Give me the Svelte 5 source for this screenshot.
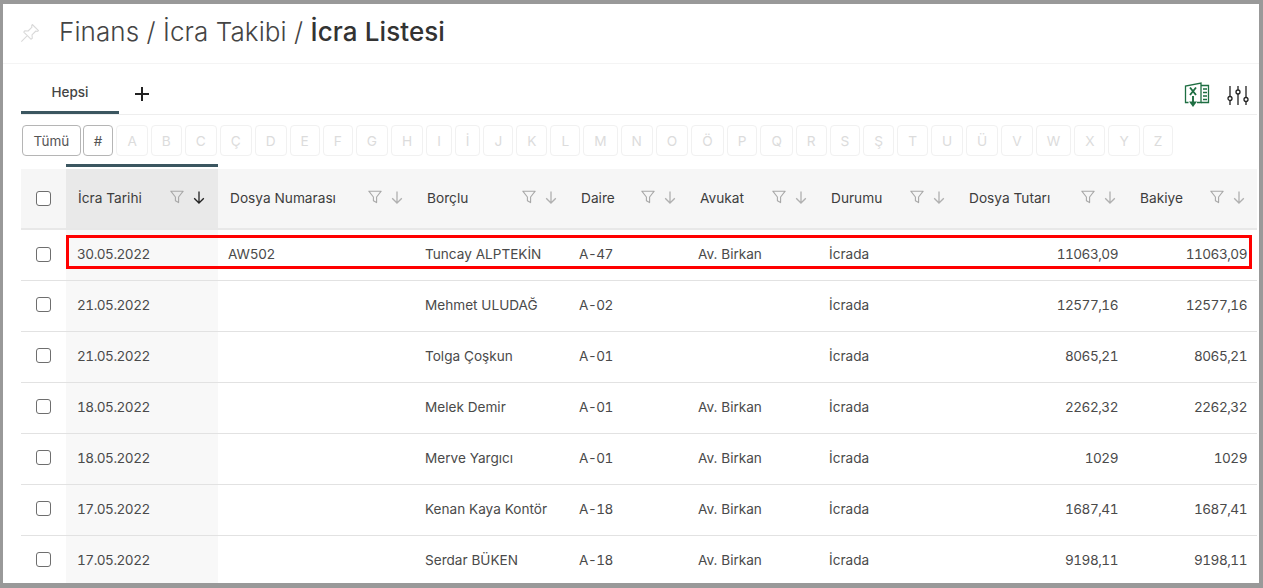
<script>
	const alphabet = ['A','B','C','Ç','D','E','F','G','H','I','İ','J','K','L','M','N','O','Ö','P','Q','R','S','Ş','T','U','Ü','V','W','X','Y','Z']

	const columns = [
		{ key: 'date', label: 'İcra Tarihi', sorted: true, num: true },
		{ key: 'file', label: 'Dosya Numarası' },
		{ key: 'debtor', label: 'Borçlu' },
		{ key: 'unit', label: 'Daire', num: true },
		{ key: 'lawyer', label: 'Avukat' },
		{ key: 'status', label: 'Durumu' },
		{ key: 'amount', label: 'Dosya Tutarı', right: true, num: true },
		{ key: 'balance', label: 'Bakiye', right: true, num: true }
	]

	const rows = [
		{ date: '30.05.2022', file: 'AW502', debtor: 'Tuncay ALPTEKİN', unit: 'A-47', lawyer: 'Av. Birkan', status: 'İcrada', amount: '11063,09', balance: '11063,09' },
		{ date: '21.05.2022', file: '', debtor: 'Mehmet ULUDAĞ', unit: 'A-02', lawyer: '', status: 'İcrada', amount: '12577,16', balance: '12577,16' },
		{ date: '21.05.2022', file: '', debtor: 'Tolga Çoşkun', unit: 'A-01', lawyer: '', status: 'İcrada', amount: '8065,21', balance: '8065,21' },
		{ date: '18.05.2022', file: '', debtor: 'Melek Demir', unit: 'A-01', lawyer: 'Av. Birkan', status: 'İcrada', amount: '2262,32', balance: '2262,32' },
		{ date: '18.05.2022', file: '', debtor: 'Merve Yargıcı', unit: 'A-01', lawyer: 'Av. Birkan', status: 'İcrada', amount: '1029', balance: '1029' },
		{ date: '17.05.2022', file: '', debtor: 'Kenan Kaya Kontör', unit: 'A-18', lawyer: 'Av. Birkan', status: 'İcrada', amount: '1687,41', balance: '1687,41' },
		{ date: '17.05.2022', file: '', debtor: 'Serdar BÜKEN', unit: 'A-18', lawyer: 'Av. Birkan', status: 'İcrada', amount: '9198,11', balance: '9198,11' }
	]
</script>

<div class="frame">
	<div class="page">
		<header class="title-bar">
			<svg class="pin" viewBox="0 0 20 20" width="20" height="20" fill="none" stroke="#d9d9d9" stroke-width="1.1" stroke-linejoin="round">
				<path d="M12.3 1.5 18.5 7.7 17 8.4 15.9 8 12 11.9 12.3 15.2 10.9 16.2 3.8 9.1 4.8 7.7 8.1 8 12 4.1 11.6 3Z" />
				<path d="M6.8 13.2 1.3 18.7" />
			</svg>
			<h1>Finans / İcra Takibi / <b>İcra Listesi</b></h1>
		</header>

		<div class="tabs">
			<div class="tab active">Hepsi</div>
			<svg class="add" viewBox="0 0 14 14" width="14" height="14" stroke="#222" stroke-width="2">
				<path d="M7 0V14M0 7H14" />
			</svg>
			<div class="tools">
				<svg viewBox="0 0 26 26" width="26" height="26" fill="none" stroke="#1e6e42" stroke-width="1.3">
					<path d="M13 20.5H17V1L1.5 4V20.5H4.5" />
					<path d="M17 3.5H24.5V20.5H17" />
					<path d="M19 7H23M19 10.5H23M19 14H23M19 17.5H23" stroke-width="1.5" />
					<path d="M6 5.5 12 13M12 5.5 6 13" stroke-width="1.9" />
					<path d="M9 14V21" stroke-width="1.9" />
					<path d="M5 19.5H13L9 25Z" fill="#1e6e42" stroke="none" />
				</svg>
				<svg viewBox="0 0 22 19" width="22" height="19" fill="none" stroke="#222" stroke-width="1.3">
					<path d="M3 0V10.5M3 14.5V19M11 0V4M11 8V19M19 0V11.5M19 15.5V19" />
					<circle cx="3" cy="12.5" r="2" />
					<circle cx="11" cy="6" r="2" />
					<circle cx="19" cy="13.5" r="2" />
				</svg>
			</div>
		</div>

		<div class="letters">
			<button class="letter on wide">Tümü</button>
			<button class="letter on">#</button>
			{#each alphabet as l}
				<button class="letter" disabled>{l}</button>
			{/each}
		</div>

		<div class="table-wrap">
			<table>
				<colgroup>
					<col style="width:45px" />
					<col style="width:152px" />
					<col style="width:197px" />
					<col style="width:154px" />
					<col style="width:119px" />
					<col style="width:131px" />
					<col style="width:138px" />
					<col style="width:171px" />
					<col style="width:129px" />
				</colgroup>
				<thead>
					<tr>
						<th class="check"><span class="box"></span></th>
						{#each columns as col}
							<th class:sorted={col.sorted}>
								<div class="th-inner">
									<span>{col.label}</span>
									<span class="th-icons">
										<svg viewBox="0 0 14 14" width="14" height="14" fill="none" stroke="#a8a8a8" stroke-width="1.1" stroke-linejoin="round">
											<path d="M0.8 1.2H13.2L8.6 7V12.6L5.4 10.8V7Z" />
										</svg>
										<svg class="arrow" viewBox="0 0 12 13" width="12" height="13" fill="none" stroke={col.sorted ? '#222' : '#b0b0b0'} stroke-width="1.3">
											<path d="M6 0.5V12M1.2 7.2 6 12 10.8 7.2" />
										</svg>
									</span>
								</div>
							</th>
						{/each}
					</tr>
				</thead>
				<tbody>
					{#each rows as row}
						<tr>
							<td class="check"><span class="box"></span></td>
							{#each columns as col}
								<td class:sorted={col.sorted} class:right={col.right} class:num={col.num}>{row[col.key]}</td>
							{/each}
						</tr>
					{/each}
				</tbody>
			</table>
			<div class="highlight"></div>
		</div>
	</div>
</div>

<style>
	:global(body) {
		margin: 0;
		background: #999;
		overflow: hidden;
	}

	.frame {
		height: 588px;
		box-sizing: border-box;
		padding: 4px 4px 5px 3px;
		font-family: Inter, "Liberation Sans", sans-serif;
		color: #444;
	}

	.page {
		height: 100%;
		background: #fff;
		overflow: hidden;
	}

	.title-bar {
		height: 60px;
		box-sizing: border-box;
		display: flex;
		align-items: center;
		gap: 19px;
		padding: 0 0 5px 17px;
		border-bottom: 1px solid #f4f4f4;
	}

	.pin {
		margin-top: 3px;
	}

	h1 {
		margin: 0;
		font-size: 26px;
		font-weight: 300;
		letter-spacing: 0.08px;
		color: #444;
		white-space: nowrap;
	}

	h1 b {
		font-weight: 500;
		color: #333;
	}

	.tabs {
		height: 51px;
		margin: 0 2px 0 18px;
		display: flex;
		align-items: flex-start;
		border-bottom: 1px solid #eee;
		box-sizing: border-box;
	}

	.tab {
		width: 98px;
		height: 50px;
		box-sizing: border-box;
		display: flex;
		align-items: center;
		justify-content: center;
		padding-top: 8px;
		font-size: 13.5px;
		font-weight: 500;
		color: #444;
		border-bottom: 3px solid #3b5660;
	}

	.add {
		margin: 23px 0 0 16px;
	}

	.tools {
		margin-left: auto;
		display: flex;
		align-items: center;
		gap: 17px;
		padding: 18px 8px 0 0;
	}

	.letters {
		display: flex;
		gap: 3px;
		margin: 10px 0 0 19px;
		height: 31px;
	}

	.letter {
		box-sizing: border-box;
		height: 31px;
		padding: 0 10px;
		background: #fff;
		border: 1px solid #f1f1f1;
		border-radius: 4px;
		font: 400 13.65px Inter, "Liberation Sans", sans-serif;
		color: #dcdcdc;
	}

	.letter.on {
		border-color: #b5b5b5;
		color: #555;
		font-size: 13.5px;
	}

	.letter.wide {
		padding: 0 10.5px;
		margin-right: -1px;
	}

	.table-wrap {
		position: relative;
		margin: 8px 0 0 18px;
		width: 1236px;
	}

	table {
		border-collapse: collapse;
		table-layout: fixed;
		width: 1236px;
	}

	th {
		height: 65px;
		padding: 3px 0 0;
		box-sizing: border-box;
		text-align: left;
		font-size: 13.7px;
		font-weight: 400;
		color: #3d3d3d;
		background: linear-gradient(#fff 5px, #f6f6f6 5px);
		border-bottom: 2px solid #e8e8e8;
	}

	th.check {
		padding-top: 4px;
	}

	th.sorted {
		background: linear-gradient(#3b5660 3px, #fff 3px, #fff 5px, #e9e9e9 5px);
	}

	.th-inner {
		display: flex;
		align-items: center;
		justify-content: space-between;
		padding: 0 12px;
	}

	th.sorted .th-inner {
		padding-right: 13px;
	}

	.th-icons {
		display: flex;
		align-items: center;
		gap: 9px;
		margin-top: -1px;
	}

	td {
		height: 51px;
		box-sizing: border-box;
		padding: 0 10px 2px;
		font-size: 13.6px;
		color: #4a4a4a;
		border-bottom: 1px solid #e2e2e2;
		white-space: nowrap;
	}

	/* digits in the reference are a bit wider than the installed Inter's proportional ones */
	td.num {
		font-variant-numeric: tabular-nums;
		letter-spacing: -0.5px;
	}

	td.sorted {
		background: #f8f8f8;
		padding-left: 11px;
	}

	td.right {
		text-align: right;
	}

	.check {
		padding: 0;
		text-align: center;
	}

	td.check {
		padding-bottom: 3px;
	}

	.box {
		display: inline-block;
		box-sizing: border-box;
		width: 15px;
		height: 15px;
		vertical-align: middle;
		background: #fff;
		border: 1.5px solid #6e6e6e;
		border-radius: 3px;
	}

	.highlight {
		position: absolute;
		left: 45px;
		top: 71px;
		width: 1186px;
		height: 34px;
		box-sizing: border-box;
		border: 3px solid #f00;
		pointer-events: none;
	}
</style>
